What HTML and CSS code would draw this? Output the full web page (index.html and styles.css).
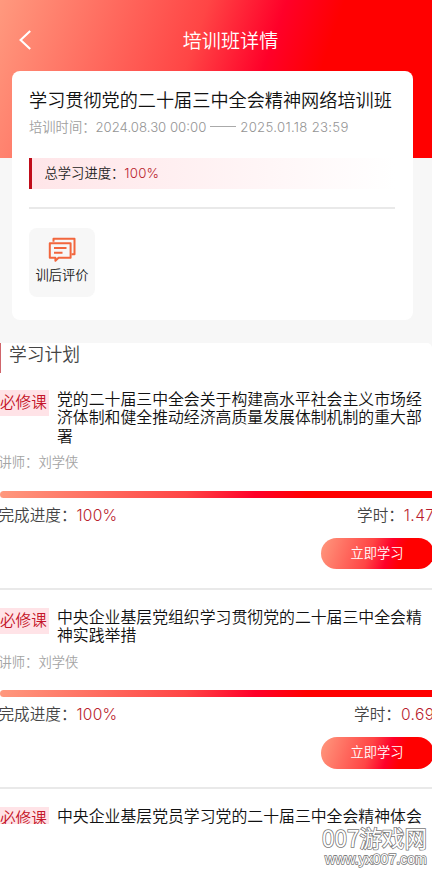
FILE: index.html
```html
<!DOCTYPE html>
<html lang="zh-CN">
<head>
<meta charset="utf-8">
<title>培训班详情</title>
<link rel="stylesheet" href="styles.css">
</head>
<body>
<div class="page">
  <header class="hero">
    <nav class="nav">
      <svg class="back" viewBox="0 0 14 20" width="14" height="20"><path d="M12.2 1 2.6 10l9.6 9" fill="none" stroke="#fff" stroke-width="2.1"/></svg>
      <h1 class="nav-title">培训班详情</h1>
    </nav>
  </header>
  <section class="card">
    <h2 class="card-title">学习贯彻党的二十届三中全会精神网络培训班</h2>
    <p class="period"><span>培训时间：</span><span class="date">2024.08.30 00:00</span><span class="dash"></span><span class="date end">2025.01.18 23:59</span></p>
    <div class="total"><span>总学习进度：</span><span class="num">100%</span></div>
    <div class="rule"></div>
    <div class="tile">
      <svg viewBox="0 0 28 26" width="28" height="26" fill="none" stroke="#f2663d" stroke-width="2" stroke-linejoin="round">
        <path d="M5.5 4.8V1.8h21v15.4h-3"/>
        <path d="M1.8 6.3h20.8v14.4h-12l-3.2 3v-3H1.8z"/>
        <path d="M6 11h12.5M6 15.8h8.5"/>
      </svg>
      <span>训后评价</span>
    </div>
  </section>
  <main class="plan">
    <h2 class="plan-title">学习计划</h2>
    <article class="course">
      <div class="head"><span class="tag">必修课</span><h3 class="name">党的二十届三中全会关于构建高水平社会主义市场经济体制和健全推动经济高质量发展体制机制的重大部署</h3></div>
      <p class="teacher">讲师：刘学侠</p>
      <div class="bar"></div>
      <div class="stats"><span>完成进度：<b class="num">100%</b></span><span>学时：<b class="hours">1.47</b></span></div>
      <button class="btn">立即学习</button>
    </article>
    <article class="course">
      <div class="head"><span class="tag">必修课</span><h3 class="name">中央企业基层党组织学习贯彻党的二十届三中全会精神实践举措</h3></div>
      <p class="teacher">讲师：刘学侠</p>
      <div class="bar"></div>
      <div class="stats"><span>完成进度：<b class="num">100%</b></span><span>学时：<b class="hours">0.69</b></span></div>
      <button class="btn">立即学习</button>
    </article>
    <article class="course last">
      <div class="head"><span class="tag">必修课</span><h3 class="name">中央企业基层党员学习党的二十届三中全会精神体会</h3></div>
    </article>
  </main>
  <div class="mark"><span class="mark-name">007游戏网</span><span class="mark-url">www.yx007.com</span></div>
</div>
</body>
</html>
```
FILE: styles.css
```css
* { box-sizing: border-box; margin: 0; padding: 0; }
body { background: #f7f7f7; font-family: "Noto Sans CJK SC", sans-serif; font-weight: 350; color: #222; }
h1, h2, h3, b { font-weight: 350; }
.page { position: relative; width: 432px; height: 870px; overflow: hidden; white-space: nowrap; }
.hero, .bar, .btn { background: linear-gradient(109deg, #ff997e 0%, #ff4545 43%, #ff0029 59%, #f00 71%); }
.hero { height: 158px; padding-top: 20px; }
.nav { display: grid; grid-template-columns: 89px 1fr 60px; align-items: center; height: 40px; }
.back { margin-left: 17.5px; }
.nav-title { text-align: center; font-size: 19.1px; line-height: 40px; color: #fff; }
.card { position: relative; width: 401px; height: 248.5px; margin: -87px 0 0 11.5px; padding: 17px 18px 0 17.5px; background: #fff; border-radius: 8px; }
.card-title { font-size: 18.15px; line-height: 23px; color: #111; }
.period { display: flex; align-items: center; height: 20px; margin-top: 5.5px; font-size: 13.3px; color: #a0a0a0; }
.date { font-family: Inter, sans-serif; font-weight: 300; font-size: 13.2px; color: #959595; }
.date.end { letter-spacing: .3px; }
.dash { width: 26px; height: 1px; margin: 0 4px; background: #aaa; }
.total { display: flex; align-items: center; height: 31px; margin-top: 21.5px; padding: 0 0 2px 12.5px; border-left: 3px solid #c00d1a; background: linear-gradient(90deg, #ffe5e8, #fff); font-size: 13.3px; }
.num, .hours { font-family: Inter, sans-serif; font-weight: 300; color: #b91d2e; }
.num { letter-spacing: .2px; }
.rule { height: 2px; margin-top: 18px; background: #e9e9e9; }
.tile { display: flex; flex-direction: column; align-items: center; width: 66px; height: 69px; margin-top: 19px; padding-top: 9px; background: #f7f7f7; border-radius: 8px; font-size: 13.3px; line-height: 20px; }
.tile svg { margin-bottom: 2px; }
.plan { height: 527px; margin-top: 23.5px; background: #fff; border-radius: 0 5px 0 0; overflow: hidden; }
.plan-title { height: 30px; padding-left: 8px; border-left: 1px solid #d0656b; font-size: 17.8px; line-height: 20px; color: #444; }
.course { padding-top: 17px; border-bottom: 2.5px solid #e9e9e9; }
.course + .course { padding-top: 18px; }
.course.last { border: 0; }
.head { display: flex; align-items: flex-start; gap: 8px; }
.tag { width: 49px; height: 26px; flex: none; background: #ffe3e7; color: #c41428; font-size: 15.6px; line-height: 23px; }
.last .tag { height: 17px; overflow: hidden; line-height: 20px; }
.name { width: 367px; white-space: normal; word-break: break-all; font-size: 15.87px; line-height: 18.3px; color: #111; }
.teacher { margin: 7.5px 0 0 -1.5px; font-size: 13.3px; line-height: 20px; color: #a4a4a4; }
.bar { height: 7px; margin-top: 18.5px; border-radius: 4px 0 0 4px; }
.stats { display: flex; justify-content: space-between; width: 436px; height: 20px; margin: 7px 0 0 -1.5px; font-size: 15.6px; line-height: 18px; color: #444; }
.hours { letter-spacing: .4px; }
.btn { display: block; width: 113px; height: 31.5px; margin: 13px 0 18.5px 320.5px; padding-bottom: 2px; border: 0; border-radius: 16px; font: 350 13.3px/28px "Noto Sans CJK SC", sans-serif; color: #fff; }
.mark { position: absolute; left: 322px; top: 823px; width: 106px; display: flex; flex-direction: column; color: #fff; paint-order: stroke fill; -webkit-text-stroke: 1.5px #777; }
.mark-name { font-size: 22.5px; line-height: 28px; font-weight: 400; }
.mark-url { margin-left: 3px; font: 400 14.1px/16px "Liberation Sans", sans-serif; }
```
